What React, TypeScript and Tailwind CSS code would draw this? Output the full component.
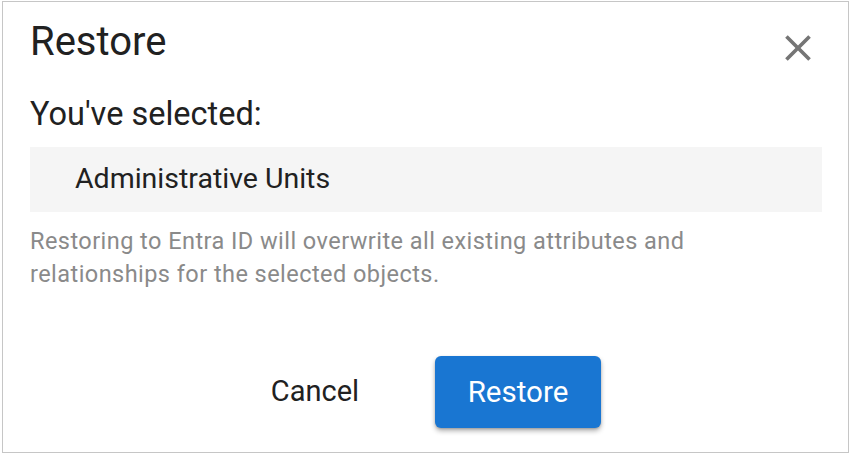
import React from "react";

export default function App() {
  return (
    <div className="w-[851px] h-[456px] bg-white pt-[1px] pl-[2px]" style={{ fontFamily: "Roboto, 'Liberation Sans', sans-serif" }}>
      <div className="w-[847px] h-[452px] border border-[#c6c6c6] bg-white flex flex-col pl-[27px] pr-[26px] pt-[17px]">
        <div className="flex items-start justify-between">
          <h1 className="text-[40px] leading-[46px] font-normal text-[#212121]">Restore</h1>
          <button className="mt-[7px] mr-[2px] w-[44px] h-[44px] flex items-center justify-center text-[#757575]">
            <svg viewBox="0 0 24 24" width="44" height="44" fill="currentColor">
              <path d="M19 6.41L17.59 5 12 10.59 6.41 5 5 6.41 10.59 12 5 17.59 6.41 19 12 13.41 17.59 19 19 17.59 13.41 12z" />
            </svg>
          </button>
        </div>
        <div className="mt-[24px] text-[32.5px] leading-[40px] text-[#212121]">You've selected:</div>
        <div className="mt-[13px] h-[65px] bg-[#f5f5f5] flex items-center pl-[45px] text-[28.5px] text-[#212121]">
          Administrative Units
        </div>
        <p className="mt-[13px] max-w-[720px] text-[23.5px] leading-[33px] tracking-[0.45px] text-[#8a8a8a]">
          Restoring to Entra ID will overwrite all existing attributes and relationships for the selected objects.
        </p>
        <div className="mt-[65px] pr-[2px] flex justify-center gap-[54px]">
          <button className="h-[72px] w-[132px] rounded-[6px] text-[29px] text-[#212121] flex items-center justify-center">
            Cancel
          </button>
          <button className="h-[72px] w-[166px] rounded-[6px] bg-[#1976d2] text-white text-[29.5px] flex items-center justify-center shadow-[0_3px_5px_rgba(0,0,0,0.3),0_1px_2px_rgba(0,0,0,0.15)]">
            Restore
          </button>
        </div>
      </div>
    </div>
  );
}
